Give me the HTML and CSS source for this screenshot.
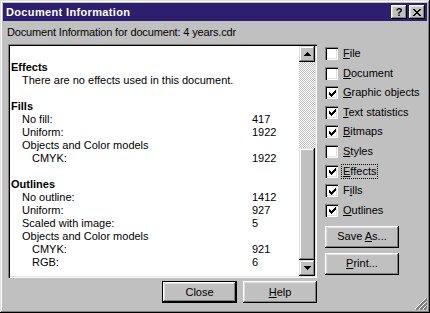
FILE: index.html
```html
<!DOCTYPE html>
<html>
<head>
<meta charset="utf-8">
<title>Document Information</title>
<link rel="stylesheet" href="styles.css">
</head>
<body>
<div class="window">
  <div class="titlebar">
    <span class="title">Document Information</span>
    <div class="tbtns">
      <span class="tbtn qbtn">?</span>
      <span class="tbtn"><svg width="8" height="7" viewBox="0 0 8 7" shape-rendering="crispEdges"><path fill="#000" d="M0 0h2v1H0zM6 0h2v1H6zM1 1h2v1H1zM5 1h2v1H5zM2 2h4v1H2zM3 3h2v1H3zM2 4h4v1H2zM1 5h2v1H1zM5 5h2v1H5zM0 6h2v1H0zM6 6h2v1H6z"/></svg></span>
    </div>
  </div>
  <div class="body">
    <div class="left">
      <div class="subtitle">Document Information for document: 4 years.cdr</div>
      <div class="listbox">
        <div class="list">
          <div class="row"></div>
          <div class="row h">Effects</div>
          <div class="row l1">There are no effects used in this document.</div>
          <div class="row"></div>
          <div class="row h">Fills</div>
          <div class="row"><span class="l1">No fill:</span><span>417</span></div>
          <div class="row"><span class="l1">Uniform:</span><span>1922</span></div>
          <div class="row"><span class="l1">Objects and Color models</span></div>
          <div class="row"><span class="l2">CMYK:</span><span>1922</span></div>
          <div class="row"></div>
          <div class="row h">Outlines</div>
          <div class="row"><span class="l1">No outline:</span><span>1412</span></div>
          <div class="row"><span class="l1">Uniform:</span><span>927</span></div>
          <div class="row"><span class="l1">Scaled with image:</span><span>5</span></div>
          <div class="row"><span class="l1">Objects and Color models</span></div>
          <div class="row"><span class="l2">CMYK:</span><span>921</span></div>
          <div class="row"><span class="l2">RGB:</span><span>6</span></div>
        </div>
        <div class="scrollbar">
          <div class="sbtn"><svg width="7" height="4" viewBox="0 0 7 4" shape-rendering="crispEdges"><path d="M3 0h1v1h1v1h1v1h1v1H0V3h1V2h1V1h1z"/></svg></div>
          <div class="track"></div>
          <div class="thumb"></div>
          <div class="sbtn"><svg width="7" height="4" viewBox="0 0 7 4" shape-rendering="crispEdges"><path d="M0 0h7v1H6v1H5v1H4v1H3V3H2V2H1V1H0z"/></svg></div>
        </div>
      </div>
      <div class="btnrow">
        <div class="btn default"><span class="btn-in">Close</span></div>
        <div class="btn"><span><u>H</u>elp</span></div>
      </div>
    </div>
    <div class="side">
      <div class="check"><span class="box"></span><span class="lbl"><u>F</u>ile</span></div>
      <div class="check"><span class="box"></span><span class="lbl"><u>D</u>ocument</span></div>
      <div class="check"><span class="box on"><svg width="7" height="7" viewBox="0 0 7 7" shape-rendering="crispEdges"><path d="M6 0h1v1H6zM5 1h2v1H5zM0 2h1v1H0zM4 2h3v1H4zM0 3h2v1H0zM3 3h3v1H3zM0 4h5v1H0zM1 5h3v1H1zM2 6h1v1H2z"/></svg></span><span class="lbl"><u>G</u>raphic objects</span></div>
      <div class="check"><span class="box on"><svg width="7" height="7" viewBox="0 0 7 7" shape-rendering="crispEdges"><path d="M6 0h1v1H6zM5 1h2v1H5zM0 2h1v1H0zM4 2h3v1H4zM0 3h2v1H0zM3 3h3v1H3zM0 4h5v1H0zM1 5h3v1H1zM2 6h1v1H2z"/></svg></span><span class="lbl"><u>T</u>ext statistics</span></div>
      <div class="check"><span class="box on"><svg width="7" height="7" viewBox="0 0 7 7" shape-rendering="crispEdges"><path d="M6 0h1v1H6zM5 1h2v1H5zM0 2h1v1H0zM4 2h3v1H4zM0 3h2v1H0zM3 3h3v1H3zM0 4h5v1H0zM1 5h3v1H1zM2 6h1v1H2z"/></svg></span><span class="lbl"><u>B</u>itmaps</span></div>
      <div class="check"><span class="box"></span><span class="lbl"><u>S</u>tyles</span></div>
      <div class="check"><span class="box on"><svg width="7" height="7" viewBox="0 0 7 7" shape-rendering="crispEdges"><path d="M6 0h1v1H6zM5 1h2v1H5zM0 2h1v1H0zM4 2h3v1H4zM0 3h2v1H0zM3 3h3v1H3zM0 4h5v1H0zM1 5h3v1H1zM2 6h1v1H2z"/></svg></span><span class="lbl focus"><u>E</u>ffects</span></div>
      <div class="check"><span class="box on"><svg width="7" height="7" viewBox="0 0 7 7" shape-rendering="crispEdges"><path d="M6 0h1v1H6zM5 1h2v1H5zM0 2h1v1H0zM4 2h3v1H4zM0 3h2v1H0zM3 3h3v1H3zM0 4h5v1H0zM1 5h3v1H1zM2 6h1v1H2z"/></svg></span><span class="lbl">F<u>i</u>lls</span></div>
      <div class="check"><span class="box on"><svg width="7" height="7" viewBox="0 0 7 7" shape-rendering="crispEdges"><path d="M6 0h1v1H6zM5 1h2v1H5zM0 2h1v1H0zM4 2h3v1H4zM0 3h2v1H0zM3 3h3v1H3zM0 4h5v1H0zM1 5h3v1H1zM2 6h1v1H2z"/></svg></span><span class="lbl"><u>O</u>utlines</span></div>
      <div class="btn side-btn first"><span>Save <u>A</u>s...</span></div>
      <div class="btn side-btn"><span><u>P</u>rint...</span></div>
    </div>
  </div>
  <svg class="grip" width="12" height="12" viewBox="0 0 12 12" shape-rendering="crispEdges">
    <path stroke="#fff" d="M11 0.5L0.5 11M11 4.5L4.5 11M11 8.5L8.5 11" fill="none"/>
    <path stroke="#808080" stroke-width="2" d="M12 1L1 12M12 5L5 12M12 9L9 12" fill="none"/>
  </svg>
</div>
</body>
</html>
```
FILE: styles.css
```css
* { box-sizing: border-box; margin: 0; padding: 0; }
html, body { width: 430px; height: 313px; overflow: hidden; }
body {
  background: #c0c0c0;
  font-family: "Liberation Sans", Arial, sans-serif;
  font-size: 11px;
  color: #000;
}
.window {
  position: relative;
  width: 430px;
  height: 313px;
  padding: 3px;
  background: #c0c0c0;
  box-shadow: inset -1px -1px #000, inset 1px 1px #dfdfdf, inset -2px -2px #808080, inset 2px 2px #fff;
}
.titlebar {
  height: 18px;
  background: #2d1f6e;
  display: flex;
  align-items: center;
  justify-content: space-between;
  padding: 0 2px 0 3px;
}
.title {
  color: #fff;
  font-weight: bold;
  font-size: 11px;
  letter-spacing: 0.35px;
  line-height: 18px;
}
.tbtns { display: flex; gap: 2px; }
.tbtn {
  width: 16px;
  height: 14px;
  background: #c0c0c0;
  display: flex;
  align-items: center;
  justify-content: center;
  box-shadow: inset -1px -1px #000, inset 1px 1px #fff, inset -2px -2px #808080, inset 2px 2px #dfdfdf;
}
.qbtn {
  font-weight: bold;
  font-size: 11px;
  line-height: 14px;
  padding-bottom: 1px;
}
.body {
  display: flex;
  padding-left: 5px;
}
.left {
  width: 309px;
  display: flex;
  flex-direction: column;
}
.subtitle {
  margin-top: 4px;
  margin-left: -1px;
  height: 14px;
  line-height: 14px;
  letter-spacing: -0.15px;
  white-space: nowrap;
}
.listbox {
  margin-top: 5px;
  height: 234px;
  display: flex;
  padding: 2px;
  background: #fff;
  box-shadow: inset 1px 1px #808080, inset 2px 2px #000, inset -1px -1px #fff, inset -2px -2px #dfdfdf;
}
.list {
  flex: 1;
  padding-top: 2px;
  overflow: hidden;
}
.row {
  display: grid;
  grid-template-columns: 242px 1fr;
  height: 13px;
  line-height: 13px;
  white-space: nowrap;
}
.row.h { font-weight: bold; padding-left: 1px; display: block; }
.row.l1 { display: block; padding-left: 12px; }
.l1 { padding-left: 12px; }
.l2 { padding-left: 22px; }
.scrollbar {
  width: 16px;
  display: flex;
  flex-direction: column;
}
.sbtn {
  height: 16px;
  background: #c0c0c0;
  display: flex;
  align-items: center;
  justify-content: center;
  box-shadow: inset -1px -1px #000, inset 1px 1px #dfdfdf, inset -2px -2px #808080, inset 2px 2px #fff;
}
.track {
  height: 86px;
  background: repeating-conic-gradient(#c0c0c0 0 25%, #fff 0 50%) 0 0 / 2px 2px;
}
.thumb {
  flex: 1;
  background: #c0c0c0;
  box-shadow: inset -1px -1px #000, inset 1px 1px #dfdfdf, inset -2px -2px #808080, inset 2px 2px #fff;
}
.btnrow {
  margin-top: 3px;
  display: flex;
  justify-content: flex-end;
  gap: 6px;
}
.btn {
  width: 74px;
  height: 22px;
  background: #c0c0c0;
  display: flex;
  align-items: center;
  justify-content: center;
  line-height: 13px;
  box-shadow: inset -1px -1px #000, inset 1px 1px #fff, inset -2px -2px #808080, inset 2px 2px #dfdfdf;
}
.btn.default {
  width: 75px;
  border: 1px solid #000;
}
.side {
  margin-left: 8px;
  width: 100px;
  padding-top: 26px;
  display: flex;
  flex-direction: column;
}
.check {
  height: 19.6px;
  display: flex;
  align-items: flex-start;
  gap: 5px;
}
.box {
  width: 13px;
  height: 13px;
  background: #fff;
  display: flex;
  align-items: center;
  justify-content: center;
  box-shadow: inset 1px 1px #808080, inset 2px 2px #000, inset -1px -1px #fff, inset -2px -2px #dfdfdf;
}
.box svg { margin: 1px 0 0 1px; }
.lbl {
  line-height: 13px;
  white-space: nowrap;
}
.lbl.focus {
  outline: 1px dotted #000;
  outline-offset: 0;
  padding: 0 1px;
  margin-left: -1px;
}
.side-btn { margin-top: 5px; }
.side-btn.first { margin-top: 2.6px; }
.grip {
  position: absolute;
  right: 3px;
  bottom: 3px;
}
```
